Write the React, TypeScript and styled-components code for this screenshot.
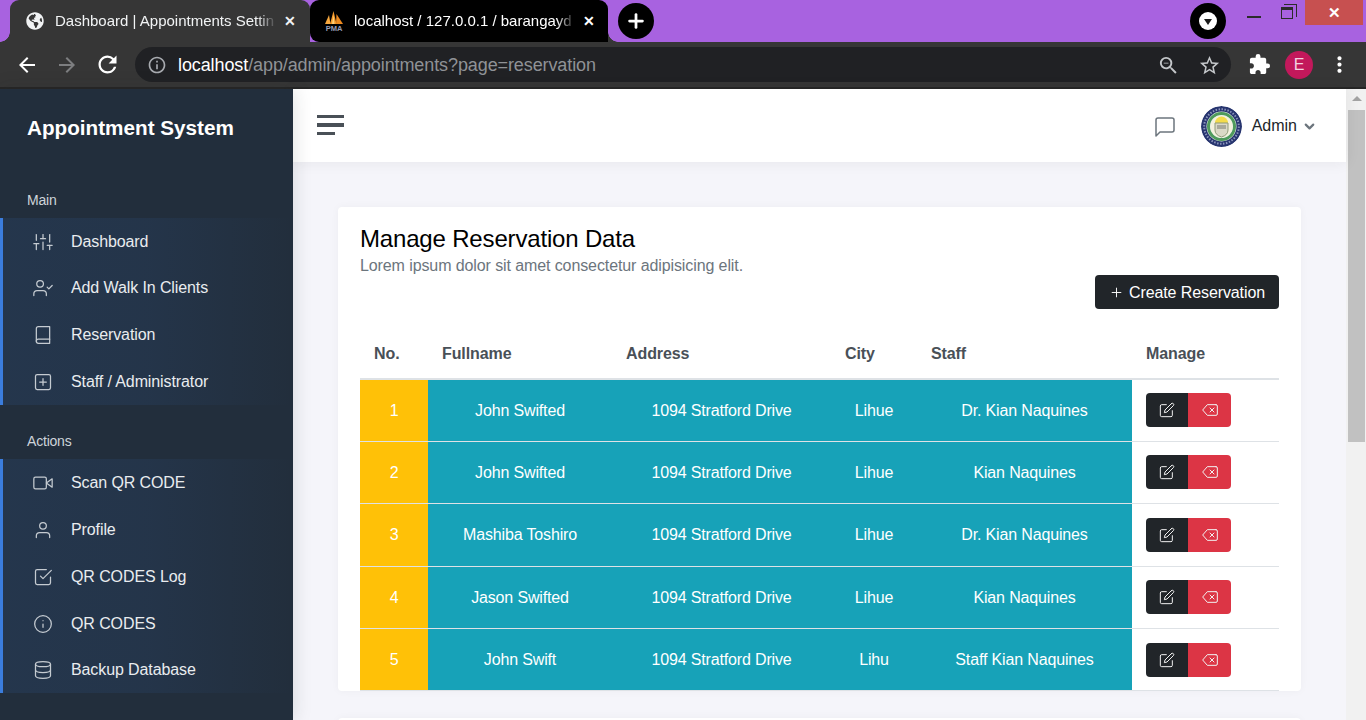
import styled, { createGlobalStyle } from 'styled-components';
import { FaGlobeAmericas } from 'react-icons/fa';
import {
  FiBook,
  FiCheckSquare,
  FiChevronDown,
  FiDatabase,
  FiDelete,
  FiEdit,
  FiInfo,
  FiMessageSquare,
  FiPlus,
  FiPlusSquare,
  FiSliders,
  FiUser,
  FiUserCheck,
  FiVideo,
} from 'react-icons/fi';
import {
  MdArrowBack,
  MdArrowForward,
  MdExtension,
  MdInfoOutline,
  MdMoreVert,
  MdRefresh,
  MdStarBorder,
  MdZoomOut,
} from 'react-icons/md';

const mainLinks = [
  { label: 'Dashboard', icon: FiSliders },
  { label: 'Add Walk In Clients', icon: FiUserCheck },
  { label: 'Reservation', icon: FiBook },
  { label: 'Staff / Administrator', icon: FiPlusSquare },
];

const actionLinks = [
  { label: 'Scan QR CODE', icon: FiVideo },
  { label: 'Profile', icon: FiUser },
  { label: 'QR CODES Log', icon: FiCheckSquare },
  { label: 'QR CODES', icon: FiInfo },
  { label: 'Backup Database', icon: FiDatabase },
];

const columns = [
  { label: 'No.', width: 68 },
  { label: 'Fullname', width: 184 },
  { label: 'Address', width: 219 },
  { label: 'City', width: 86 },
  { label: 'Staff', width: 215 },
  { label: 'Manage', width: 147 },
];

const reservations = [
  { name: 'John Swifted', city: 'Lihue', staff: 'Dr. Kian Naquines' },
  { name: 'John Swifted', city: 'Lihue', staff: 'Kian Naquines' },
  { name: 'Mashiba Toshiro', city: 'Lihue', staff: 'Dr. Kian Naquines' },
  { name: 'Jason Swifted', city: 'Lihue', staff: 'Kian Naquines' },
  { name: 'John Swift', city: 'Lihu', staff: 'Staff Kian Naquines' },
];

function PmaLogo() {
  return (
    <LogoSvg viewBox="0 0 20 20" aria-hidden="true">
      <path d="M1 13 L5 4 L6.5 13 Z" fill="#f7a83f" />
      <path d="M6 13 L9.5 0 L12.5 13 Z" fill="#f59a2c" />
      <path d="M12 13 L12.5 3 L19 13 Z" fill="#ee8a1f" />
      <path d="M8 13 L9.5 4 L10.5 13 Z" fill="#ffd27a" />
      <text x="10" y="19.5" textAnchor="middle" fontSize="7.5" fontWeight="700" fill="#9a9eb8" fontFamily="Liberation Sans, sans-serif">
        PMA
      </text>
    </LogoSvg>
  );
}

function Seal() {
  return (
    <SealSvg viewBox="0 0 41 41" aria-hidden="true">
      <circle cx="20.5" cy="20.5" r="20.5" fill="#27356f" />
      <circle cx="20.5" cy="20.5" r="17.3" fill="none" stroke="#8b93bb" strokeWidth="2" strokeDasharray="1.5 1.5" />
      <circle cx="20.5" cy="20.5" r="15" fill="#e8efe6" />
      <circle cx="20.5" cy="20.5" r="13" fill="none" stroke="#4f9a5c" strokeWidth="3" />
      <circle cx="20.5" cy="20.5" r="11" fill="#f4f1dd" />
      <path d="M14 17 a6.5 6.5 0 0 1 13 0 z" fill="#f4dc4a" />
      <path d="M14 17 h13 v7 q0 5 -6.5 7 q-6.5 -2 -6.5 -7 z" fill="#dbd9c6" stroke="#8f9a78" strokeWidth="1" />
      <rect x="16" y="19" width="9" height="4" fill="#a9a99a" />
    </SealSvg>
  );
}

export default function App() {
  return (
    <Page>
      <GlobalStyle />
      <TabStrip>
        <ActiveTab>
          <TabFavicon>
            <FaGlobeAmericas size={18} />
          </TabFavicon>
          <TabTitle>Dashboard | Appointments Settin</TabTitle>
          <TabClose>✕</TabClose>
        </ActiveTab>
        <BlackTab>
          <TabFavicon>
            <PmaLogo />
          </TabFavicon>
          <TabTitle>localhost / 127.0.0.1 / barangayd</TabTitle>
          <TabClose>✕</TabClose>
        </BlackTab>
        <NewTab>
          <FiPlus size={22} strokeWidth={3} />
        </NewTab>
        <StripSpacer />
        <TabSearch>
          <TabSearchInner />
        </TabSearch>
        <WindowButtons>
          <Minimize />
          <Restore />
          <CloseWindow>✕</CloseWindow>
        </WindowButtons>
      </TabStrip>

      <Toolbar>
        <NavButton>
          <MdArrowBack size={24} />
        </NavButton>
        <NavButton $dim>
          <MdArrowForward size={24} />
        </NavButton>
        <NavButton>
          <MdRefresh size={27} />
        </NavButton>
        <Omnibox>
          <MdInfoOutline size={20} color="#a8abb0" />
          <Url>
            <UrlHost>localhost</UrlHost>/app/admin/appointments?page=reservation
          </Url>
          <OmniIcons>
            <MdZoomOut size={23} />
            <MdStarBorder size={23} />
          </OmniIcons>
        </Omnibox>
        <ToolbarEnd>
          <MdExtension size={23} color="#fff" />
          <ProfileBadge>E</ProfileBadge>
          <MdMoreVert size={25} color="#fff" />
        </ToolbarEnd>
      </Toolbar>

      <Body>
        <Sidebar>
          <Brand>Appointment System</Brand>
          <SectionLabel>Main</SectionLabel>
          {mainLinks.map(({ label, icon: Icon }) => (
            <SideLink key={label}>
              <Icon size={20} strokeWidth={1.5} />
              <span>{label}</span>
            </SideLink>
          ))}
          <SectionLabel>Actions</SectionLabel>
          {actionLinks.map(({ label, icon: Icon }) => (
            <SideLink key={label}>
              <Icon size={20} strokeWidth={1.5} />
              <span>{label}</span>
            </SideLink>
          ))}
        </Sidebar>

        <Main>
          <Topbar>
            <Hamburger>
              <HamburgerBar />
              <HamburgerBar />
              <HamburgerBar $short />
            </Hamburger>
            <TopbarEnd>
              <FiMessageSquare size={24} color="#6c757d" strokeWidth={1.5} />
              <UserMenu>
                <Seal />
                <UserName>Admin</UserName>
                <FiChevronDown size={15} color="#6c757d" strokeWidth={3.5} />
              </UserMenu>
            </TopbarEnd>
          </Topbar>

          <Content>
            <Card>
              <CardTitle>Manage Reservation Data</CardTitle>
              <CardSubtitle>Lorem ipsum dolor sit amet consectetur adipisicing elit.</CardSubtitle>
              <CardActions>
                <CreateButton>
                  <FiPlus size={15} strokeWidth={1.5} />
                  Create Reservation
                </CreateButton>
              </CardActions>
              <Table>
                <colgroup>
                  {columns.map((col) => (
                    <col key={col.label} style={{ width: col.width }} />
                  ))}
                </colgroup>
                <thead>
                  <tr>
                    {columns.map((col) => (
                      <Th key={col.label}>{col.label}</Th>
                    ))}
                  </tr>
                </thead>
                <tbody>
                  {reservations.map((row, i) => (
                    <tr key={i}>
                      <NumberCell>{i + 1}</NumberCell>
                      <InfoCell>{row.name}</InfoCell>
                      <InfoCell>1094 Stratford Drive</InfoCell>
                      <InfoCell>{row.city}</InfoCell>
                      <InfoCell>{row.staff}</InfoCell>
                      <ManageCell>
                        <ButtonGroup>
                          <EditButton>
                            <FiEdit size={16} strokeWidth={1.5} />
                          </EditButton>
                          <DeleteButton>
                            <FiDelete size={16} strokeWidth={1.5} />
                          </DeleteButton>
                        </ButtonGroup>
                      </ManageCell>
                    </tr>
                  ))}
                </tbody>
              </Table>
            </Card>
            <Card />
          </Content>
        </Main>

        <Scrollbar>
          <ScrollArrow />
          <ScrollThumb />
        </Scrollbar>
      </Body>
    </Page>
  );
}

const GlobalStyle = createGlobalStyle`
  html, body {
    margin: 0;
    height: 100%;
    overflow: hidden;
  }
  body {
    font-family: "Liberation Sans", Arial, sans-serif;
    font-size: 16px;
    color: #212529;
  }
  * {
    box-sizing: border-box;
  }
`;

const Page = styled.div`
  display: flex;
  flex-direction: column;
  height: 100vh;
  overflow: hidden;
`;

const TabStrip = styled.div`
  display: flex;
  align-items: flex-start;
  height: 42px;
  padding-left: 10px;
  background: #a862e0;
  flex: none;
`;

const ActiveTab = styled.div`
  position: relative;
  display: flex;
  align-items: center;
  width: 300px;
  height: 42px;
  padding: 0 11px 0 15px;
  background: #363636;
  border-radius: 9px 9px 0 0;
  color: #f1f3f4;

  &::before {
    content: '';
    position: absolute;
    left: -10px;
    bottom: 0;
    width: 10px;
    height: 10px;
    background: radial-gradient(circle at 0 0, transparent 9.5px, #363636 10px);
  }
`;

const BlackTab = styled(ActiveTab)`
  width: 298px;
  padding: 0 10px 0 14px;
  background: #000;
  border-radius: 9px 9px 0 9px;
  color: #fff;

  &::before {
    left: -10px;
    background: #363636;
    z-index: -1;
  }

  &::after {
    content: '';
    position: absolute;
    right: -10px;
    bottom: 0;
    width: 10px;
    height: 10px;
    background: radial-gradient(circle at 100% 0, transparent 9.5px, #363636 10px);
  }
`;

const TabFavicon = styled.span`
  display: flex;
  align-items: center;
  justify-content: center;
  width: 20px;
  height: 20px;
  margin-right: 10px;
  flex: none;
`;

const LogoSvg = styled.svg`
  width: 20px;
  height: 20px;
  flex: none;
`;

const TabTitle = styled.span`
  flex: 1;
  min-width: 0;
  margin-bottom: 1px;
  overflow: hidden;
  white-space: nowrap;
  font-size: 15px;
  -webkit-mask-image: linear-gradient(90deg, #000 calc(100% - 20px), transparent);
  mask-image: linear-gradient(90deg, #000 calc(100% - 20px), transparent);
`;

const TabClose = styled.span`
  width: 18px;
  margin-left: 4px;
  font-size: 14px;
  font-weight: 700;
  text-align: center;
  flex: none;
`;

const NewTab = styled.div`
  display: flex;
  align-items: center;
  justify-content: center;
  width: 36px;
  height: 36px;
  margin: 3px 0 0 10px;
  border-radius: 50%;
  background: #000;
  color: #fff;
  flex: none;
`;

const StripSpacer = styled.div`
  flex: 1;
`;

const TabSearch = styled.div`
  display: flex;
  align-items: center;
  justify-content: center;
  width: 36px;
  height: 36px;
  margin-top: 3px;
  border-radius: 50%;
  background: #000;
  flex: none;
`;

const TabSearchInner = styled.div`
  position: relative;
  width: 18px;
  height: 18px;
  border-radius: 50%;
  background: #fff;

  &::after {
    content: '';
    position: absolute;
    left: 5px;
    top: 7px;
    border-left: 4px solid transparent;
    border-right: 4px solid transparent;
    border-top: 6px solid #1b1b1b;
  }
`;

const WindowButtons = styled.div`
  display: flex;
  align-items: flex-start;
  width: 140px;
  padding: 0 3px 0 21px;
  flex: none;
`;

const Minimize = styled.div`
  width: 14px;
  height: 2px;
  margin-top: 16px;
  background: #2b2b2b;
`;

const Restore = styled.div`
  position: relative;
  width: 12px;
  height: 12px;
  margin: 7px 0 0 20px;
  border: 1.5px solid #2b2b2b;
  border-top-width: 3px;

  &::after {
    content: '';
    position: absolute;
    top: -6px;
    right: -4.5px;
    width: 12px;
    height: 12px;
    border-top: 1.5px solid #2b2b2b;
    border-right: 1.5px solid #2b2b2b;
  }
`;

const CloseWindow = styled.div`
  display: flex;
  align-items: center;
  justify-content: center;
  width: 58px;
  height: 25px;
  margin-left: auto;
  background: #c75050;
  color: #fff;
  font-size: 15px;
  font-weight: 700;
`;

const Toolbar = styled.div`
  display: flex;
  align-items: center;
  height: 47px;
  padding: 0 14px 0 9px;
  background: #363636;
  border-bottom: 2px solid #262626;
  flex: none;
`;

const NavButton = styled.div<{ $dim?: boolean }>`
  display: flex;
  align-items: center;
  justify-content: center;
  width: 36px;
  margin-right: 4px;
  color: ${(p) => (p.$dim ? '#7d7e80' : '#fff')};
  flex: none;
`;

const Omnibox = styled.div`
  display: flex;
  align-items: center;
  flex: 1;
  height: 35px;
  margin-left: 6px;
  padding: 0 10px 0 12px;
  border-radius: 18px;
  background: #202124;
`;

const Url = styled.div`
  margin: 2px 0 0 11px;
  font-size: 18px;
  letter-spacing: -0.1px;
  color: #8f9296;
  white-space: nowrap;
`;

const UrlHost = styled.span`
  color: #fff;
`;

const OmniIcons = styled.div`
  display: flex;
  align-items: center;
  gap: 18px;
  margin: 1px 0 0 auto;
  color: #c4c7ca;
`;

const ToolbarEnd = styled.div`
  display: flex;
  align-items: center;
  gap: 14px;
  margin-left: 17px;
`;

const ProfileBadge = styled.div`
  display: flex;
  align-items: center;
  justify-content: center;
  width: 28px;
  height: 28px;
  border-radius: 50%;
  background: #c2185b;
  color: #f3d3e0;
  font-size: 16px;
`;

const Body = styled.div`
  display: flex;
  flex: 1;
  min-height: 0;
`;

const Sidebar = styled.nav`
  position: relative;
  z-index: 2;
  display: flex;
  flex-direction: column;
  width: 293px;
  background: #222e3c;
  box-shadow: 0 0 18px rgba(33, 37, 41, 0.15);
  flex: none;
`;

const Brand = styled.div`
  display: flex;
  align-items: center;
  height: 74.4px;
  padding: 3.6px 0 0 27px;
  color: #fff;
  font-size: 20.7px;
  font-weight: 700;
`;

const SectionLabel = styled.div`
  padding: 1.4px 27px 7px;
  line-height: 21px;
  margin-top: 25px;
  color: #ced4da;
  font-size: 14px;
  letter-spacing: -0.2px;
`;

const SideLink = styled.a`
  display: flex;
  align-items: center;
  gap: 18px;
  height: 46.8px;
  padding: 1px 0 0 30px;
  border-left: 3px solid #3b7ddd;
  background: linear-gradient(90deg, rgba(59, 125, 221, 0.1), rgba(59, 125, 221, 0.0875) 50%, transparent);
  color: #e9ecef;
  font-size: 16px;
  letter-spacing: -0.1px;

  svg {
    color: #c5cbd1;
    flex: none;
  }
`;

const Main = styled.main`
  display: flex;
  flex-direction: column;
  flex: 1;
  min-width: 0;
  background: #f5f5fa;
`;

const Topbar = styled.header`
  position: relative;
  z-index: 1;
  display: flex;
  align-items: center;
  justify-content: space-between;
  height: 73px;
  padding: 2px 29px 0 24px;
  background: #fff;
  box-shadow: 0 0 14px rgba(33, 37, 41, 0.08);
  flex: none;
`;

const Hamburger = styled.div`
  display: flex;
  flex-direction: column;
  gap: 5px;
  width: 27px;
  margin-bottom: 3px;
`;

const HamburgerBar = styled.span<{ $short?: boolean }>`
  display: block;
  width: ${(p) => (p.$short ? '18px' : '27px')};
  height: 3.4px;
  background: #495057;
`;

const TopbarEnd = styled.div`
  display: flex;
  align-items: center;
  gap: 24px;
`;

const UserMenu = styled.div`
  display: flex;
  align-items: center;
`;

const SealSvg = styled.svg`
  width: 41px;
  height: 41px;
  border-radius: 50%;
  flex: none;
  filter: blur(0.4px);
`;

const UserName = styled.span`
  margin: 0 5px 2px 10px;
  color: #212529;
  font-size: 16px;
`;

const Content = styled.div`
  display: flex;
  flex-direction: column;
  gap: 27px;
  flex: 1;
  min-height: 0;
  overflow: hidden;
  padding: 45px;
`;

const Card = styled.section`
  padding: 18px 22px 0;
  border-radius: 4px;
  background: #fff;
  box-shadow: 0 0 8px rgba(33, 37, 41, 0.04);
  flex: none;
`;

const CardTitle = styled.h2`
  margin: 0;
  color: #000;
  font-size: 24px;
  font-weight: 400;
  line-height: 28px;
  letter-spacing: -0.17px;
`;

const CardSubtitle = styled.p`
  margin: 0;
  padding-top: 1px;
  color: #6c757d;
  font-size: 16px;
  line-height: 24px;
  letter-spacing: -0.1px;
`;

const CardActions = styled.div`
  display: flex;
  justify-content: flex-end;
  margin-top: -3px;
`;

const CreateButton = styled.button`
  display: flex;
  align-items: center;
  gap: 5px;
  height: 34px;
  padding: 1px 14px 0 14px;
  border: 0;
  border-radius: 4px;
  background: #212529;
  color: #fff;
  font-family: inherit;
  font-size: 16px;
  letter-spacing: -0.1px;
`;

const Table = styled.table`
  width: 919px;
  margin-top: 18px;
  border-collapse: collapse;
  table-layout: fixed;
`;

const Th = styled.th`
  height: 52px;
  padding: 2px 14px 0;
  border-bottom: 2px solid #dee2e6;
  color: #495057;
  font-size: 16px;
  font-weight: 700;
  text-align: left;
  letter-spacing: -0.1px;
`;

const BodyCell = styled.td`
  height: 62.4px;
  padding: 0.6px 14px 0;
  border-bottom: 1px solid #dee2e6;
  font-size: 16px;
  letter-spacing: -0.15px;
`;

const NumberCell = styled(BodyCell)`
  background: #ffc107;
  color: #fff;
  text-align: center;
`;

const InfoCell = styled(BodyCell)`
  background: #17a2b8;
  color: #fff;
  text-align: center;
`;

const ManageCell = styled(BodyCell)`
  padding: 0 14px 0.5px;
  background: #fff;
`;

const ButtonGroup = styled.div`
  display: flex;
  width: 85px;
  height: 34px;
  border-radius: 4px;
  overflow: hidden;
`;

const EditButton = styled.button`
  display: flex;
  align-items: center;
  justify-content: center;
  width: 42px;
  border: 0;
  padding: 0;
  background: #212529;
  color: #f1f1f1;
`;

const DeleteButton = styled(EditButton)`
  width: 43px;
  background: #dc3545;
`;

const Scrollbar = styled.div`
  width: 20px;
  padding: 0 1px 0 2px;
  background: #f1f1f1;
  flex: none;
`;

const ScrollArrow = styled.div`
  width: 0;
  height: 0;
  margin: 7px auto 9px;
  border-left: 5px solid transparent;
  border-right: 5px solid transparent;
  border-bottom: 5px solid #a3a3a3;
`;

const ScrollThumb = styled.div`
  height: 332px;
  background: #c1c1c1;
`;
